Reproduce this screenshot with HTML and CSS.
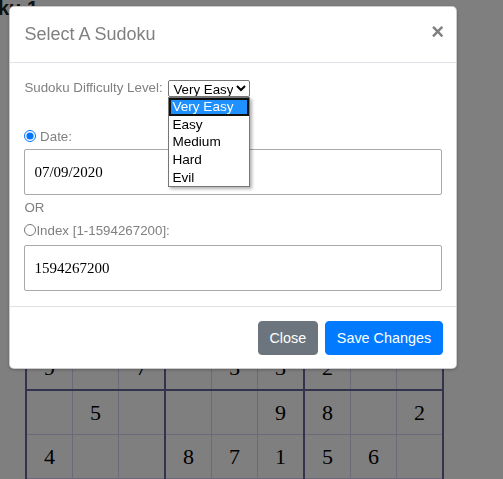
FILE: index.html
```html
<!DOCTYPE html>
<html>
<head>
<meta charset="utf-8">
<link rel="stylesheet" href="styles.css">
</head>
<body>
<div class="page">
  <h1 class="page-title">Sudoku 1</h1>
  <table class="board">
    <tr><td></td><td></td><td class="br"></td><td></td><td></td><td class="br"></td><td></td><td></td><td></td></tr>
    <tr><td></td><td></td><td class="br"></td><td></td><td></td><td class="br"></td><td></td><td></td><td></td></tr>
    <tr class="bb"><td></td><td></td><td class="br"></td><td></td><td></td><td class="br"></td><td></td><td></td><td></td></tr>
    <tr><td></td><td></td><td class="br"></td><td></td><td></td><td class="br"></td><td></td><td></td><td></td></tr>
    <tr><td></td><td></td><td class="br"></td><td></td><td></td><td class="br"></td><td></td><td></td><td></td></tr>
    <tr class="bb"><td>9</td><td></td><td class="br">7</td><td></td><td>5</td><td class="br">3</td><td>2</td><td></td><td></td></tr>
    <tr><td></td><td>5</td><td class="br"></td><td></td><td></td><td class="br">9</td><td>8</td><td></td><td>2</td></tr>
    <tr><td>4</td><td></td><td class="br"></td><td>8</td><td>7</td><td class="br">1</td><td>5</td><td>6</td><td></td></tr>
    <tr class="bb"><td></td><td></td><td class="br"></td><td></td><td></td><td class="br"></td><td></td><td></td><td></td></tr>
  </table>
</div>

<div class="backdrop"></div>

<div class="modal">
  <div class="modal-header">
    <h5 class="modal-title">Select A Sudoku</h5>
    <span class="close">&times;</span>
  </div>
  <div class="modal-body">
    <div class="row level-row">
      Sudoku Difficulty Level:
      <span class="select-wrap">
        <select class="level-select">
          <option>Very Easy</option>
          <option>Easy</option>
          <option>Medium</option>
          <option>Hard</option>
          <option>Evil</option>
        </select>
        <ul class="dropdown">
          <li class="opt active">Very Easy</li>
          <li class="opt">Easy</li>
          <li class="opt">Medium</li>
          <li class="opt">Hard</li>
          <li class="opt">Evil</li>
        </ul>
      </span>
    </div>
    <div class="row date-row"><input type="radio" class="radio" name="kind" checked> Date:</div>
    <input type="text" class="field date-field" value="07/09/2020">
    <div class="row or-row">OR</div>
    <div class="row index-row"><input type="radio" class="radio" name="kind">Index [1-1594267200]:</div>
    <input type="text" class="field" value="1594267200">
  </div>
  <div class="modal-footer">
    <button class="btn btn-secondary">Close</button>
    <button class="btn btn-primary">Save Changes</button>
  </div>
</div>
</body>
</html>
```

FILE: styles.css
```css
html, body {
  margin: 0;
  padding: 0;
  overflow: hidden;
  background: #fff;
  font-family: "Liberation Sans", Arial, sans-serif;
}

.page {
  padding-left: 25px;
}

.page-title {
  margin: -7px 0 0 -77px;
  font-size: 20px;
  line-height: 30px;
  font-weight: bold;
  color: #212529;
  white-space: nowrap;
}

.board {
  margin-top: 100px;
  border-collapse: collapse;
  border: 2px solid #66669c;
  table-layout: fixed;
}

.board td {
  width: 45px;
  height: 43px;
  padding: 0;
  border: 1px solid #d4d4f0;
  text-align: center;
  vertical-align: middle;
  font-family: "Liberation Serif", "Times New Roman", serif;
  font-size: 22px;
  color: #000;
}

.board td.br {
  border-right: 2px solid #66669c;
}

.board tr.bb td {
  border-bottom: 2px solid #66669c;
}

.backdrop {
  position: fixed;
  inset: 0;
  background: rgba(0, 0, 0, 0.5);
}

.modal {
  position: fixed;
  top: 6px;
  left: 9px;
  width: 448px;
  box-sizing: border-box;
  background: #fff;
  border: 1px solid rgba(0, 0, 0, 0.2);
  border-radius: 5px;
  box-shadow: 0 1px 3px rgba(0, 0, 0, 0.25);
}

.modal-header {
  display: flex;
  align-items: center;
  justify-content: space-between;
  padding: 14px 14px 14px 14.4px;
  border-bottom: 1px solid #dee2e6;
}

.modal-title {
  margin: 0;
  font-size: 18px;
  line-height: 27px;
  font-weight: normal;
  color: #808080;
}

.close {
  font-size: 22px;
  line-height: 27px;
  font-weight: bold;
  color: #808080;
  margin: -6px -2px 0 0;
}

.modal-body {
  padding: 14px 14.4px 15px;
  font-size: 13.33px;
  color: #808080;
}

.row {
  height: 22px;
  line-height: 22px;
}

.select-wrap {
  position: relative;
  display: inline-block;
  vertical-align: middle;
  margin-left: 2px;
}

.level-select {
  display: block;
  height: 17px;
  width: 82px;
  padding: 0;
  margin: 0;
  font-family: "Liberation Sans", Arial, sans-serif;
  font-size: 13.33px;
  color: #000;
  border: 1px solid #767676;
  border-radius: 2px;
  background: #fff;
}

.dropdown {
  position: absolute;
  top: 17px;
  left: 0;
  width: 82px;
  box-sizing: border-box;
  margin: 0;
  padding: 0;
  list-style: none;
  background: #fff;
  border: 1px solid #767676;
  box-shadow: 2px 2px 3px rgba(0, 0, 0, 0.3);
  z-index: 2;
}

.opt {
  height: 17.7px;
  line-height: 17.7px;
  padding: 0 3px;
  font-size: 13.6px;
  color: #000;
  white-space: nowrap;
}

.opt.active {
  background: #1e90ff;
  color: #fff;
  box-shadow: inset 0 0 0 2px #111;
}

.date-row {
  margin-top: 27px;
}

.radio {
  width: 12px;
  height: 12px;
  margin: 0;
  vertical-align: -1px;
}

.field {
  display: block;
  width: 100%;
  height: 46px;
  box-sizing: border-box;
  margin-top: 3px;
  padding: 0 9px;
  border: 1px solid #a9a9a9;
  border-radius: 2px;
  font-family: "Liberation Serif", "Times New Roman", serif;
  font-size: 15px;
  color: #000;
  background: #fff;
}

.date-field {
  margin-top: 1px;
}

.or-row {
  margin-top: 2px;
}

.index-row {
  margin-top: 1px;
}

.modal-footer {
  display: flex;
  justify-content: flex-end;
  gap: 7px;
  padding: 14px 13px 13px;
  border-top: 1px solid #dee2e6;
}

.btn {
  height: 34px;
  padding: 0 10.8px;
  border: 1px solid transparent;
  border-radius: 4px;
  font-family: "Liberation Sans", Arial, sans-serif;
  font-size: 14.4px;
  color: #fff;
}

.btn-secondary {
  background: #6c757d;
  border-color: #6c757d;
}

.btn-primary {
  background: #007bff;
  border-color: #007bff;
}
```
